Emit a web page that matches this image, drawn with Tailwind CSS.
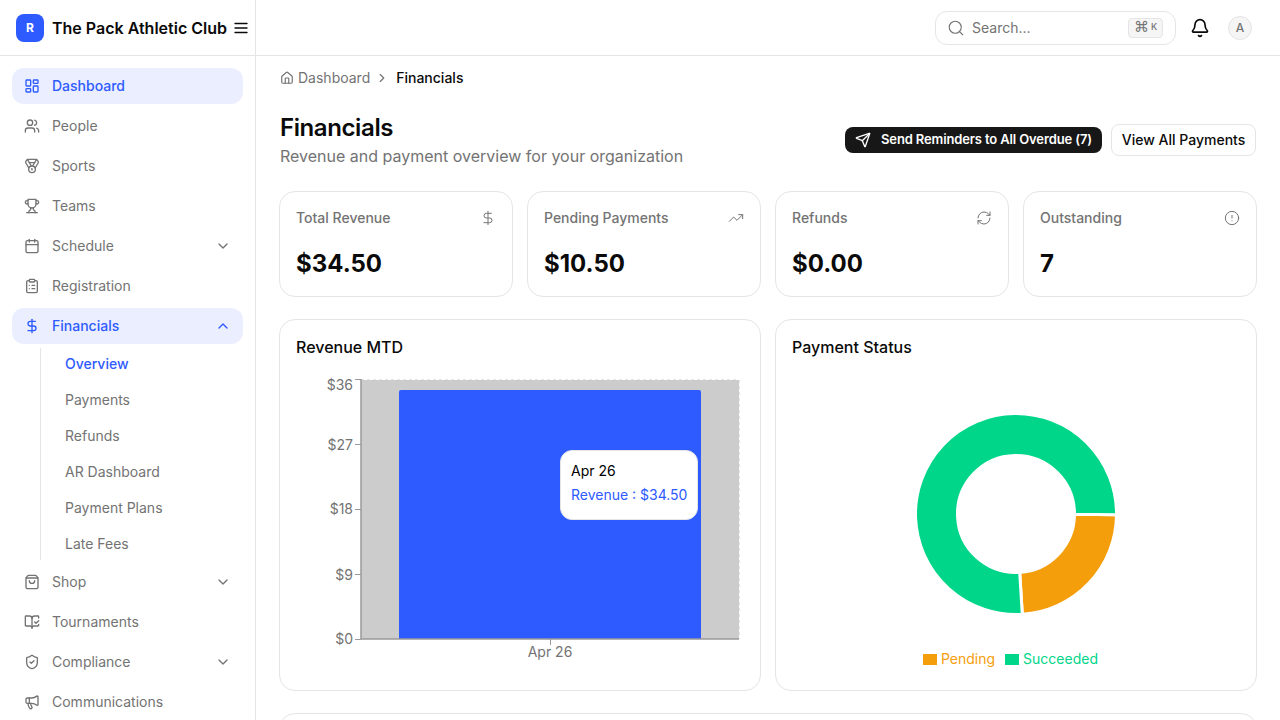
<!DOCTYPE html>
<html lang="en">
<head>
    <meta charset="UTF-8">
    <meta name="viewport" content="width=device-width, initial-scale=1.0">
    <title>The Pack Athletic Club - Financials</title>
    <script src="https://cdn.jsdelivr.net/npm/@tailwindcss/browser@4"></script>
</head>
<body class="bg-white font-['Inter',sans-serif] text-[#0a0a0a]">
    <!-- Icon set -->
    <svg class="hidden">
        <symbol id="i-dashboard" viewBox="0 0 24 24"><rect x="3" y="3" width="7" height="9" rx="1"/><rect x="14" y="3" width="7" height="5" rx="1"/><rect x="14" y="12" width="7" height="9" rx="1"/><rect x="3" y="16" width="7" height="5" rx="1"/></symbol>
        <symbol id="i-users" viewBox="0 0 24 24"><path d="M16 21v-2a4 4 0 0 0-4-4H6a4 4 0 0 0-4 4v2"/><circle cx="9" cy="7" r="4"/><path d="M22 21v-2a4 4 0 0 0-3-3.87"/><path d="M16 3.13a4 4 0 0 1 0 7.75"/></symbol>
        <symbol id="i-medal" viewBox="0 0 24 24"><path d="M7.21 15 2.66 7.14a2 2 0 0 1 .13-2.2L4.4 2.8A2 2 0 0 1 6 2h12a2 2 0 0 1 1.6.8l1.6 2.14a2 2 0 0 1 .14 2.2L16.79 15"/><path d="M11 12 5.12 2.2"/><path d="m13 12 5.88-9.8"/><path d="M8 7h8"/><circle cx="12" cy="17" r="5"/><path d="M12 18v-2h-.5"/></symbol>
        <symbol id="i-trophy" viewBox="0 0 24 24"><path d="M6 9H4.5a2.5 2.5 0 0 1 0-5H6"/><path d="M18 9h1.5a2.5 2.5 0 0 0 0-5H18"/><path d="M4 22h16"/><path d="M10 14.66V17c0 .55-.47.98-.97 1.21C7.85 18.75 7 20.24 7 22"/><path d="M14 14.66V17c0 .55.47.98.97 1.21C16.15 18.75 17 20.24 17 22"/><path d="M18 2H6v7a6 6 0 0 0 12 0V2Z"/></symbol>
        <symbol id="i-calendar" viewBox="0 0 24 24"><path d="M8 2v4"/><path d="M16 2v4"/><rect x="3" y="4" width="18" height="18" rx="2"/><path d="M3 10h18"/></symbol>
        <symbol id="i-clipboard" viewBox="0 0 24 24"><rect x="8" y="2" width="8" height="4" rx="1"/><path d="M16 4h2a2 2 0 0 1 2 2v14a2 2 0 0 1-2 2H6a2 2 0 0 1-2-2V6a2 2 0 0 1 2-2h2"/><path d="M12 11h4"/><path d="M12 16h4"/><path d="M8 11h.01"/><path d="M8 16h.01"/></symbol>
        <symbol id="i-dollar" viewBox="0 0 24 24"><path d="M12 2v20"/><path d="M17 5H9.5a3.5 3.5 0 0 0 0 7h5a3.5 3.5 0 0 1 0 7H6"/></symbol>
        <symbol id="i-bag" viewBox="0 0 24 24"><path d="M16 10a4 4 0 0 1-8 0"/><path d="M3.103 6.034h17.794"/><path d="M3.4 5.467a2 2 0 0 0-.4 1.2V20a2 2 0 0 0 2 2h14a2 2 0 0 0 2-2V6.667a2 2 0 0 0-.4-1.2l-2-2.667A2 2 0 0 0 17 2H7a2 2 0 0 0-1.6.8z"/></symbol>
        <symbol id="i-book" viewBox="0 0 24 24"><path d="M12 21V7"/><path d="m16 12 2 2 4-4"/><path d="M22 6V4a1 1 0 0 0-1-1h-5a4 4 0 0 0-4 4 4 4 0 0 0-4-4H3a1 1 0 0 0-1 1v13a1 1 0 0 0 1 1h6a3 3 0 0 1 3 3 3 3 0 0 1 3-3h6a1 1 0 0 0 1-1v-1.3"/></symbol>
        <symbol id="i-shield" viewBox="0 0 24 24"><path d="M20 13c0 5-3.5 7.5-7.66 8.95a1 1 0 0 1-.67-.01C7.5 20.5 4 18 4 13V6a1 1 0 0 1 1-1c2 0 4.5-1.2 6.24-2.72a1.17 1.17 0 0 1 1.52 0C14.51 3.81 17 5 19 5a1 1 0 0 1 1 1z"/><path d="m9 12 2 2 4-4"/></symbol>
        <symbol id="i-megaphone" viewBox="0 0 24 24"><path d="M11 6a13 13 0 0 0 8.4-2.8A1 1 0 0 1 21 4v12a1 1 0 0 1-1.6.8A13 13 0 0 0 11 14H5a2 2 0 0 1-2-2V8a2 2 0 0 1 2-2z"/><path d="M6 14a12 12 0 0 0 2.4 7.2 2 2 0 0 0 3.2-2.4A8 8 0 0 1 10 14"/><path d="M8 6v8"/></symbol>
        <symbol id="i-down" viewBox="0 0 24 24"><path d="m6 9 6 6 6-6"/></symbol>
        <symbol id="i-up" viewBox="0 0 24 24"><path d="m18 15-6-6-6 6"/></symbol>
        <symbol id="i-right" viewBox="0 0 24 24"><path d="m9 18 6-6-6-6"/></symbol>
    </svg>

    <div class="flex h-screen overflow-hidden">
        <!-- Sidebar -->
        <aside class="w-[256px] shrink-0 border-r border-[#e5e5e5] overflow-hidden">
            <div class="h-14 flex items-center pl-4 border-b border-[#e5e5e5]">
                <div class="w-7 h-7 rounded-lg bg-[#2e5bff] text-white text-xs font-bold flex items-center justify-center">R</div>
                <span class="ml-2 text-base font-semibold whitespace-nowrap">The Pack Athletic Club</span>
                <svg class="ml-[5px] w-[18px] h-[18px]" viewBox="0 0 24 24" fill="none" stroke="currentColor" stroke-width="1.75" stroke-linecap="round"><path d="M4 6h16"/><path d="M4 12h16"/><path d="M4 18h16"/></svg>
            </div>
            <nav class="pt-3 px-3 text-sm text-[#737373]">
                <div class="space-y-1">
                    <a class="h-9 flex items-center pl-3 rounded-xl bg-[#eaeeff] text-[#2e5bff] font-medium">
                        <svg class="w-4 h-4 mr-3 fill-none stroke-current stroke-2 [stroke-linecap:round] [stroke-linejoin:round]"><use href="#i-dashboard"/></svg>Dashboard
                    </a>
                    <a class="h-9 flex items-center pl-3 rounded-xl">
                        <svg class="w-4 h-4 mr-3 fill-none stroke-current stroke-2 [stroke-linecap:round] [stroke-linejoin:round]"><use href="#i-users"/></svg>People
                    </a>
                    <a class="h-9 flex items-center pl-3 rounded-xl">
                        <svg class="w-4 h-4 mr-3 fill-none stroke-current stroke-2 [stroke-linecap:round] [stroke-linejoin:round]"><use href="#i-medal"/></svg>Sports
                    </a>
                    <a class="h-9 flex items-center pl-3 rounded-xl">
                        <svg class="w-4 h-4 mr-3 fill-none stroke-current stroke-2 [stroke-linecap:round] [stroke-linejoin:round]"><use href="#i-trophy"/></svg>Teams
                    </a>
                    <a class="h-9 flex items-center pl-3 pr-3 rounded-xl">
                        <svg class="w-4 h-4 mr-3 fill-none stroke-current stroke-2 [stroke-linecap:round] [stroke-linejoin:round]"><use href="#i-calendar"/></svg>Schedule
                        <svg class="ml-auto w-4 h-4 fill-none stroke-current stroke-2 [stroke-linecap:round] [stroke-linejoin:round]"><use href="#i-down"/></svg>
                    </a>
                    <a class="h-9 flex items-center pl-3 rounded-xl">
                        <svg class="w-4 h-4 mr-3 fill-none stroke-current stroke-2 [stroke-linecap:round] [stroke-linejoin:round]"><use href="#i-clipboard"/></svg>Registration
                    </a>
                    <a class="h-9 flex items-center pl-3 pr-3 rounded-xl bg-[#eaeeff] text-[#2e5bff] font-medium">
                        <svg class="w-4 h-4 mr-3 fill-none stroke-current stroke-2 [stroke-linecap:round] [stroke-linejoin:round]"><use href="#i-dollar"/></svg>Financials
                        <svg class="ml-auto w-4 h-4 fill-none stroke-current stroke-2 [stroke-linecap:round] [stroke-linejoin:round]"><use href="#i-up"/></svg>
                    </a>
                </div>
                <!-- Financials submenu -->
                <div class="ml-7 my-1 pl-6 border-l border-[#e5e5e5] h-[212px] flex flex-col">
                    <div class="-mt-[2px]">
                        <a class="h-9 flex items-center text-[#2e5bff] font-medium">Overview</a>
                        <a class="h-9 flex items-center">Payments</a>
                        <a class="h-9 flex items-center">Refunds</a>
                        <a class="h-9 flex items-center">AR Dashboard</a>
                        <a class="h-9 flex items-center">Payment Plans</a>
                        <a class="h-9 flex items-center">Late Fees</a>
                    </div>
                </div>
                <div class="space-y-1">
                    <a class="h-9 flex items-center pl-3 pr-3 rounded-xl">
                        <svg class="w-4 h-4 mr-3 fill-none stroke-current stroke-2 [stroke-linecap:round] [stroke-linejoin:round]"><use href="#i-bag"/></svg>Shop
                        <svg class="ml-auto w-4 h-4 fill-none stroke-current stroke-2 [stroke-linecap:round] [stroke-linejoin:round]"><use href="#i-down"/></svg>
                    </a>
                    <a class="h-9 flex items-center pl-3 rounded-xl">
                        <svg class="w-4 h-4 mr-3 fill-none stroke-current stroke-2 [stroke-linecap:round] [stroke-linejoin:round]"><use href="#i-book"/></svg>Tournaments
                    </a>
                    <a class="h-9 flex items-center pl-3 pr-3 rounded-xl">
                        <svg class="w-4 h-4 mr-3 fill-none stroke-current stroke-2 [stroke-linecap:round] [stroke-linejoin:round]"><use href="#i-shield"/></svg>Compliance
                        <svg class="ml-auto w-4 h-4 fill-none stroke-current stroke-2 [stroke-linecap:round] [stroke-linejoin:round]"><use href="#i-down"/></svg>
                    </a>
                    <a class="h-9 flex items-center pl-3 rounded-xl">
                        <svg class="w-4 h-4 mr-3 fill-none stroke-current stroke-2 [stroke-linecap:round] [stroke-linejoin:round]"><use href="#i-megaphone"/></svg>Communications
                    </a>
                </div>
            </nav>
        </aside>

        <div class="flex-1 min-w-0 overflow-hidden">
            <!-- Header -->
            <header class="h-14 flex items-center justify-end border-b border-[#e5e5e5] pr-7">
                <div class="w-[241px] h-[34px] flex items-center border border-[#e5e5e5] rounded-xl pl-[11px] pr-3 text-sm text-[#737373]">
                    <svg class="w-[18px] h-[18px] mr-[7px]" viewBox="0 0 24 24" fill="none" stroke="currentColor" stroke-width="1.5" stroke-linecap="round"><circle cx="11" cy="11" r="8"/><path d="m21 21-4.3-4.3"/></svg>
                    <span>Search...</span>
                    <span class="ml-auto w-[35px] h-5 flex items-center justify-center gap-[2px] rounded bg-[#f5f5f5] border border-[#e5e5e5] text-[9px] font-medium"><span class="text-[15px] leading-none font-['DejaVu_Sans']">⌘</span>K</span>
                </div>
                <svg class="ml-[14px] w-5 h-5 text-[#0a0a0a]" viewBox="0 0 24 24" fill="none" stroke="currentColor" stroke-width="2" stroke-linecap="round" stroke-linejoin="round"><path d="M10.268 21a2 2 0 0 0 3.464 0"/><path d="M3.262 15.326A1 1 0 0 0 4 17h16a1 1 0 0 0 .74-1.673C19.41 13.956 18 12.499 18 8A6 6 0 0 0 6 8c0 4.499-1.411 5.956-2.738 7.326"/></svg>
                <div class="ml-[18px] w-6 h-6 rounded-full bg-[#f5f5f5] border border-[#e5e5e5] flex items-center justify-center text-xs font-medium text-[#737373]">A</div>
            </header>

            <main class="pl-6 pr-6">
                <!-- Breadcrumb -->
                <div class="h-11 flex items-center text-sm text-[#737373]">
                    <svg class="w-[14px] h-[14px] mr-1" viewBox="0 0 24 24" fill="none" stroke="currentColor" stroke-width="2" stroke-linecap="round" stroke-linejoin="round"><path d="M15 21v-8a1 1 0 0 0-1-1h-4a1 1 0 0 0-1 1v8"/><path d="M3 10a2 2 0 0 1 .709-1.528l7-5.999a2 2 0 0 1 2.582 0l7 5.999A2 2 0 0 1 21 10v9a2 2 0 0 1-2 2H5a2 2 0 0 1-2-2z"/></svg>
                    Dashboard
                    <svg class="w-[14px] h-[14px] mx-[5px] fill-none stroke-current stroke-2 [stroke-linecap:round] [stroke-linejoin:round]"><use href="#i-right"/></svg>
                    <span class="ml-[2px] font-medium text-[#0a0a0a]">Financials</span>
                </div>

                <!-- Title row -->
                <div class="flex items-start justify-between mt-[14px]">
                    <div>
                        <h1 class="text-2xl leading-7 font-semibold tracking-[-0.4px]">Financials</h1>
                        <p class="mt-[2px] text-base text-[#737373]">Revenue and payment overview for your organization</p>
                    </div>
                    <div class="flex items-center gap-[9px] mt-[10px]">
                        <button class="h-[26px] w-[257px] flex items-center pl-[10px] rounded-lg bg-[#171717] text-white text-[13px] tracking-[-0.13px] font-semibold whitespace-nowrap">
                            <svg class="w-4 h-4 mr-[10px]" viewBox="0 0 24 24" fill="none" stroke="currentColor" stroke-width="2" stroke-linecap="round" stroke-linejoin="round"><path d="M14.536 21.686a.5.5 0 0 0 .937-.024l6.5-19a.496.496 0 0 0-.635-.635l-19 6.5a.5.5 0 0 0-.024.937l7.93 3.18a2 2 0 0 1 1.112 1.11z"/><path d="m21.854 2.147-10.94 10.939"/></svg>
                            Send Reminders to All Overdue (7)
                        </button>
                        <button class="h-8 w-[145px] flex items-center justify-center rounded-lg border border-[#e5e5e5] bg-white text-sm font-medium">View All Payments</button>
                    </div>
                </div>

                <!-- Stat cards -->
                <div class="grid grid-cols-4 gap-[14px] -mx-[1px] mt-[23px]">
                    <div class="h-[106px] rounded-2xl border border-[#e5e5e5] pt-[15px] px-4">
                        <div class="flex items-center justify-between text-sm text-[#737373] font-medium h-[22px]">
                            <span>Total Revenue</span>
                            <svg class="w-4 h-4 fill-none stroke-current stroke-[1.5] [stroke-linecap:round] [stroke-linejoin:round]"><use href="#i-dollar"/></svg>
                        </div>
                        <div class="mt-[19px] text-2xl leading-8 font-bold">$34.50</div>
                    </div>
                    <div class="h-[106px] rounded-2xl border border-[#e5e5e5] pt-[15px] px-4">
                        <div class="flex items-center justify-between text-sm text-[#737373] font-medium h-[22px]">
                            <span>Pending Payments</span>
                            <svg class="w-4 h-4" viewBox="0 0 24 24" fill="none" stroke="currentColor" stroke-width="1.5" stroke-linecap="round" stroke-linejoin="round"><path d="M22 7 13.5 15.5 8.5 10.5 2 17"/><path d="M16 7h6v6"/></svg>
                        </div>
                        <div class="mt-[19px] text-2xl leading-8 font-bold">$10.50</div>
                    </div>
                    <div class="h-[106px] rounded-2xl border border-[#e5e5e5] pt-[15px] px-4">
                        <div class="flex items-center justify-between text-sm text-[#737373] font-medium h-[22px]">
                            <span>Refunds</span>
                            <svg class="w-4 h-4" viewBox="0 0 24 24" fill="none" stroke="currentColor" stroke-width="1.5" stroke-linecap="round" stroke-linejoin="round"><path d="M3 12a9 9 0 0 1 9-9 9.75 9.75 0 0 1 6.74 2.74L21 8"/><path d="M21 3v5h-5"/><path d="M21 12a9 9 0 0 1-9 9 9.75 9.75 0 0 1-6.74-2.74L3 16"/><path d="M8 16H3v5"/></svg>
                        </div>
                        <div class="mt-[19px] text-2xl leading-8 font-bold">$0.00</div>
                    </div>
                    <div class="h-[106px] rounded-2xl border border-[#e5e5e5] pt-[15px] px-4">
                        <div class="flex items-center justify-between text-sm text-[#737373] font-medium h-[22px]">
                            <span>Outstanding</span>
                            <svg class="w-4 h-4" viewBox="0 0 24 24" fill="none" stroke="currentColor" stroke-width="1.5" stroke-linecap="round" stroke-linejoin="round"><circle cx="12" cy="12" r="10"/><path d="M12 8v4"/><path d="M12 16h.01"/></svg>
                        </div>
                        <div class="mt-[19px] text-2xl leading-8 font-bold">7</div>
                    </div>
                </div>

                <!-- Charts -->
                <div class="grid grid-cols-2 gap-[14px] -mx-[1px] mt-[22px]">
                    <div class="h-[372px] rounded-2xl border border-[#e5e5e5] p-4">
                        <h3 class="-mt-[1px] text-base leading-6 font-medium">Revenue MTD</h3>
                        <div class="relative mt-[9px]">
                            <svg class="block w-[448px] h-[306px]" viewBox="296 368 448 306" font-size="14" fill="#737373">
                                <rect x="361" y="380" width="378" height="259" fill="#cccccc"/>
                                <path d="M361 380H739V639" fill="none" stroke="#cccccc" stroke-dasharray="3 3"/>
                                <path d="M401 390H699a2 2 0 0 1 2 2V639H399V392a2 2 0 0 1 2-2z" fill="#2e5bff"/>
                                <path d="M361 379V639H739" fill="none" stroke="#999999" stroke-width="1.5"/>
                                <path d="M355 379.5h6M355 444.5h6M355 509.5h6M355 574.5h6M355 639.5h6M550.5 639v6" fill="none" stroke="#999999"/>
                                <text x="353" y="390" text-anchor="end">$36</text>
                                <text x="353" y="450" text-anchor="end">$27</text>
                                <text x="353" y="514" text-anchor="end">$18</text>
                                <text x="353" y="580" text-anchor="end">$9</text>
                                <text x="353" y="644" text-anchor="end">$0</text>
                                <text x="550" y="657" text-anchor="middle">Apr 26</text>
                            </svg>
                            <!-- Tooltip -->
                            <div class="absolute left-[264px] top-[82px] w-[138px] h-[70px] rounded-xl bg-white border border-[#e5e5e5] pl-[10px] pt-2 text-sm leading-6 whitespace-nowrap">
                                <div class="text-black">Apr 26</div>
                                <div class="text-[#2e5bff]">Revenue : $34.50</div>
                            </div>
                        </div>
                    </div>
                    <div class="h-[372px] rounded-2xl border border-[#e5e5e5] p-4">
                        <h3 class="-mt-[1px] text-base leading-6 font-medium">Payment Status</h3>
                        <svg class="block mt-[9px] w-[448px] h-[281px]" viewBox="792 368 448 281">
                            <path d="M1116.5 514.8A100.5 100.5 0 0 1 1022.3 614.3L1019.7 572.4A58.5 58.5 0 0 0 1074.5 514.3Z" fill="#f59e0b" stroke="#ffffff" stroke-width="3"/>
                            <path d="M1022.3 614.3A100.5 100.5 0 1 1 1116.5 514.8L1074.5 514.3A58.5 58.5 0 1 0 1019.7 572.4Z" fill="#00d68a" stroke="#ffffff" stroke-width="3"/>
                        </svg>
                        <div class="h-5 pr-[11px] flex items-center justify-center text-sm">
                            <span class="w-[14px] h-[11px] bg-[#f59e0b] mr-[4px]"></span><span class="text-[#f59e0b]">Pending</span>
                            <span class="w-[14px] h-[11px] bg-[#00d68a] ml-[10px] mr-[4px]"></span><span class="text-[#00d68a]">Succeeded</span>
                        </div>
                    </div>
                </div>

                <!-- Next card, cut off by the fold -->
                <div class="h-40 rounded-2xl border border-[#e5e5e5] -mx-[1px] mt-[22px]"></div>
            </main>
        </div>
    </div>
</body>
</html>
